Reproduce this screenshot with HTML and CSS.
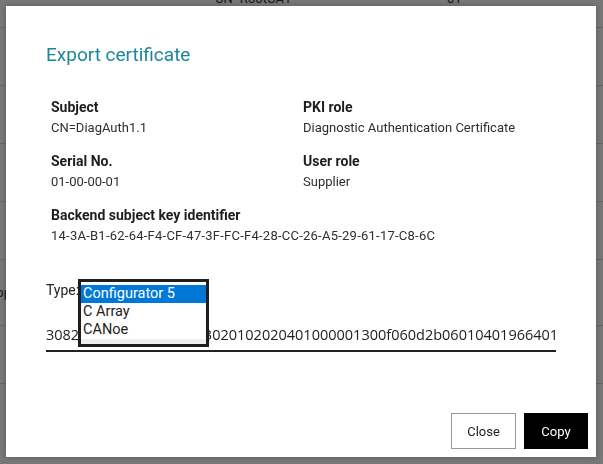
FILE: index.html
```html
<!DOCTYPE html>
<html lang="en">
<head>
<meta charset="utf-8">
<title>Export certificate</title>
<link rel="stylesheet" href="styles.css">
</head>
<body>
<div class="page">
  <div class="table">
    <div class="row"><div class="cell c1"></div><div class="cell c2">CN=RootCA1</div><div class="cell c3">01</div></div>
    <div class="row"><div class="cell c1"></div><div class="cell c2">CN=DiagAuth1.1</div><div class="cell c3">01-00-00-01</div></div>
    <div class="row"><div class="cell c1"></div><div class="cell c2">CN=Backend</div><div class="cell c3">02</div></div>
    <div class="row"><div class="cell c1"></div><div class="cell c2">CN=Test</div><div class="cell c3">03</div></div>
    <div class="row"><div class="cell c1"></div><div class="cell c2">CN=Device</div><div class="cell c3">04</div></div>
    <div class="row tall"><div class="cell c1"><span class="clip-right">Workshop</span></div><div class="cell c2">CN=Supplier</div><div class="cell c3">05</div></div>
    <div class="row"><div class="cell c1"></div><div class="cell c2">CN=Tester</div><div class="cell c3">06</div></div>
  </div>
</div>
<div class="overlay"></div>
<div class="modal" role="dialog" aria-label="Export certificate">
  <h1 class="title">Export certificate</h1>
  <div class="details">
    <div class="field">
      <div class="label">Subject</div>
      <div class="value">CN=DiagAuth1.1</div>
    </div>
    <div class="field">
      <div class="label">PKI role</div>
      <div class="value">Diagnostic Authentication Certificate</div>
    </div>
    <div class="field">
      <div class="label">Serial No.</div>
      <div class="value">01-00-00-01</div>
    </div>
    <div class="field">
      <div class="label">User role</div>
      <div class="value">Supplier</div>
    </div>
    <div class="field wide">
      <div class="label">Backend subject key identifier</div>
      <div class="value value-key">14-3A-B1-62-64-F4-CF-47-3F-FC-F4-28-CC-26-A5-29-61-17-C8-6C</div>
    </div>
  </div>
  <div class="export">
    <div class="type-row"><span class="type-label">Type:</span></div>
    <div class="data-field"><div class="data-text">308202b030820293a003020102020401000001300f060d2b06010401966401010b0500308199310b3009060355040613024445</div></div>
    <div class="listbox" role="listbox">
      <div class="option selected">Configurator 5</div>
      <div class="option">C Array</div>
      <div class="option">CANoe</div>
      <div class="listbox-end"></div>
    </div>
  </div>
  <div class="footer">
    <button class="btn btn-close" type="button">Close</button>
    <button class="btn btn-copy" type="button">Copy</button>
  </div>
</div>
</body>
</html>
```

FILE: styles.css
```css
html, body {
  margin: 0;
  padding: 0;
  width: 603px;
  height: 464px;
  overflow: hidden;
  background: #ffffff;
  font-family: Roboto, "Liberation Sans", sans-serif;
}

.page {
  margin-top: -30px;
  height: 494px;
  overflow: hidden;
}

.row {
  display: grid;
  grid-template-columns: 215px 232px 1fr;
  height: 58px;
  align-items: center;
  border-bottom: 1px solid #d6d6d6;
  box-sizing: border-box;
  font-size: 13px;
  color: #333;
}

.row.tall {
  height: 66px;
}

.cell {
  white-space: nowrap;
  overflow: hidden;
}

.c1 {
  display: flex;
  justify-content: flex-end;
  width: 11px;
  overflow: visible;
}

.overlay {
  position: fixed;
  inset: 0;
  background: rgba(0, 0, 0, 0.53);
}

.modal {
  position: absolute;
  left: 6px;
  top: 6px;
  width: 590px;
  height: 451px;
  box-sizing: border-box;
  background: #ffffff;
  display: flex;
  flex-direction: column;
  box-shadow: 0 0 6px rgba(0, 0, 0, 0.25);
}

.title {
  margin: 37px 40px 0;
  font-size: 19px;
  line-height: 24px;
  font-weight: 400;
  color: #1b879a;
}

.details {
  margin-top: 31px;
  padding-left: 45px;
  display: grid;
  grid-template-columns: 252px 1fr;
  row-gap: 16px;
}

.field.wide {
  grid-column: 1 / 3;
}

.label {
  font-size: 14px;
  line-height: 18px;
  font-weight: 700;
  color: #1e1e1e;
  margin-bottom: 4px;
}

.value {
  font-size: 13px;
  line-height: 16px;
  color: #2e2e2e;
}

.value-key {
  letter-spacing: 0.24px;
}

.export {
  position: relative;
  margin: 37px 40px 0;
}

.type-label {
  font-size: 14px;
  line-height: 18px;
  color: #222;
}

.type-row {
  height: 18px;
  line-height: 18px;
}

.data-field {
  margin-top: 26px;
  border-bottom: 2px solid #222;
  padding-bottom: 5px;
  overflow: hidden;
}

.data-text {
  font-family: "Open Sans", "DejaVu Sans", sans-serif;
  font-size: 14.5px;
  line-height: 20px;
  color: #222;
  white-space: nowrap;
}

.listbox {
  position: absolute;
  left: 32px;
  top: -2px;
  width: 131px;
  box-sizing: border-box;
  border: 3px solid #1e1e1e;
  background: #ffffff;
  padding-top: 3px;
}

.option {
  height: 18px;
  line-height: 18px;
  padding-left: 2px;
  font-size: 14.5px;
  color: #222;
  white-space: nowrap;
}

.option.selected {
  background: #0078d7;
  color: #ffffff;
}

.listbox-end {
  height: 5px;
  background: #f0f0f0;
}

.footer {
  margin-top: auto;
  display: flex;
  justify-content: flex-end;
  gap: 8px;
  padding: 0 8px 8px;
}

.btn {
  height: 36px;
  font-family: Roboto, "Liberation Sans", sans-serif;
  font-size: 13px;
  padding: 0;
  cursor: pointer;
}

.btn-close {
  width: 65px;
  background: #ffffff;
  border: 1px solid #9a9a9a;
  color: #222;
}

.btn-copy {
  width: 64px;
  background: #000000;
  border: 1px solid #000000;
  color: #ffffff;
}
```
